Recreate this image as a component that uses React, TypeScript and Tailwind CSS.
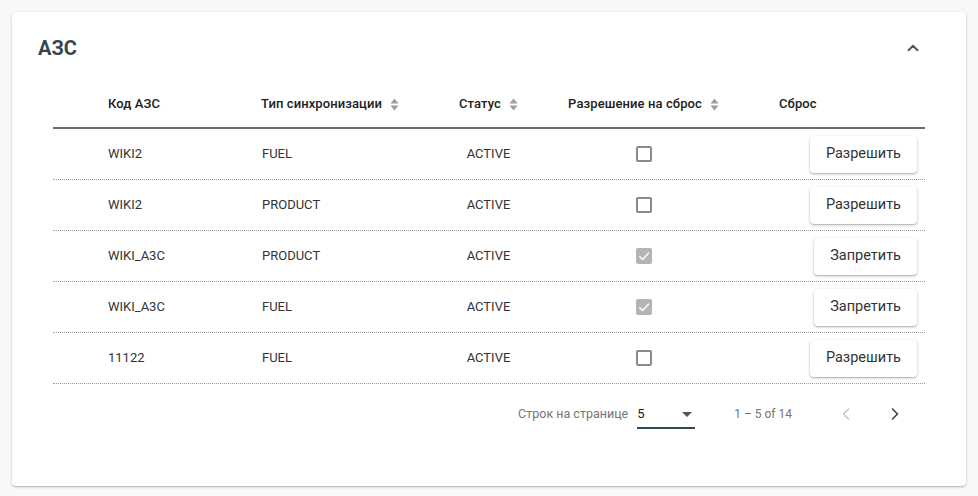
import { ChevronUp, ChevronLeft, ChevronRight } from 'lucide-react';

type Row = {
  code: string;
  sync: string;
  status: string;
  allowed: boolean;
};

const rows: Row[] = [
  { code: 'WIKI2', sync: 'FUEL', status: 'ACTIVE', allowed: false },
  { code: 'WIKI2', sync: 'PRODUCT', status: 'ACTIVE', allowed: false },
  { code: 'WIKI_A3C', sync: 'PRODUCT', status: 'ACTIVE', allowed: true },
  { code: 'WIKI_A3C', sync: 'FUEL', status: 'ACTIVE', allowed: true },
  { code: '11122', sync: 'FUEL', status: 'ACTIVE', allowed: false },
];

const cols = 'grid grid-cols-[208px_176px_103px_207px_1fr] items-center';

function SortIcon() {
  return (
    <svg width="9" height="13" viewBox="0 0 9 13" className="ml-2 shrink-0">
      <path d="M4.5 0.5 L8.5 5.5 H0.5 Z" fill="#9e9e9e" />
      <path d="M4.5 12.5 L8.5 7.5 H0.5 Z" fill="#9e9e9e" />
    </svg>
  );
}

function Checkbox({ checked }: { checked: boolean }) {
  if (checked) {
    return (
      <span className="flex h-4 w-4 items-center justify-center rounded-[2px] bg-[#b4b4b4]">
        <svg width="14" height="14" viewBox="0 0 24 24">
          <path d="M4 12.5 L9.5 18 L20.5 6.5" fill="none" stroke="#fff" strokeWidth="2.4" />
        </svg>
      </span>
    );
  }
  return <span className="block h-4 w-4 rounded-[2px] border-2 border-[#8a8a8a]" />;
}

function HeaderRow() {
  return (
    <div className={`${cols} h-[48px] border-b-2 border-[#6b6b6b] text-[13px] font-medium tracking-[0.1px] text-[#212121]`}>
      <div className="pl-[55px]">Код АЗС</div>
      <div className="flex items-center">
        Тип синхронизации
        <SortIcon />
      </div>
      <div className="flex items-center justify-center">
        Статус
        <SortIcon />
      </div>
      <div className="flex items-center justify-center">
        Разрешение на сброс
        <SortIcon />
      </div>
      <div className="pl-[32px]">Сброс</div>
    </div>
  );
}

function DataRow({ row }: { row: Row }) {
  return (
    <div className={`${cols} h-[51px] border-b border-dotted border-[#9a9a9a] text-[13px] text-[#333]`}>
      <div className="pl-[55px]">{row.code}</div>
      <div className="pl-px">{row.sync}</div>
      <div className="text-center">{row.status}</div>
      <div className="flex justify-center">
        <Checkbox checked={row.allowed} />
      </div>
      <div className="flex justify-end pr-2">
        <button className="h-[37px] rounded-[4px] bg-white px-4 text-[14.5px] text-[#333] shadow-[0_1px_3px_rgba(0,0,0,0.25),0_1px_1px_rgba(0,0,0,0.12)]">
          {row.allowed ? 'Запретить' : 'Разрешить'}
        </button>
      </div>
    </div>
  );
}

function Pagination() {
  return (
    <div className="flex h-[60px] items-center justify-end text-[12px] text-[#757575]">
      <span className="text-[12.5px]">Строк на странице</span>
      <div className="ml-[9px] flex h-[30px] w-[58px] items-center justify-between border-b-2 border-[#37474f] pt-[2px] text-[13px] text-[#212121]">
        <span>5</span>
        <svg width="10" height="5" viewBox="0 0 10 5" className="mr-[3px]">
          <path d="M0 0 H10 L5 5 Z" fill="#555" />
        </svg>
      </div>
      <span className="ml-[39px] mr-[44px]">1 – 5 of 14</span>
      <ChevronLeft size={20} strokeWidth={2} className="mr-[29px] text-[#c8c8c8]" />
      <ChevronRight size={20} strokeWidth={2} className="mr-[20px] text-[#444]" />
    </div>
  );
}

export default function App() {
  return (
    <div className="min-h-[496px] bg-[#f8f8f8] px-3 pt-3 font-['Roboto',sans-serif]">
      <section className="h-[474px] rounded-[4px] bg-white shadow-[0_1px_3px_rgba(0,0,0,0.2),0_1px_1px_rgba(0,0,0,0.1)]">
        <div className="flex h-[69px] items-center justify-between pl-[26px] pr-[44px] pt-[3px]">
          <h2 className="text-[20px] font-bold text-[#37474f]">АЗС</h2>
          <ChevronUp size={18} strokeWidth={2.5} className="text-[#555]" />
        </div>
        <div className="mx-[41px]">
          <HeaderRow />
          {rows.map((row, i) => (
            <DataRow key={i} row={row} />
          ))}
          <Pagination />
        </div>
      </section>
    </div>
  );
}
